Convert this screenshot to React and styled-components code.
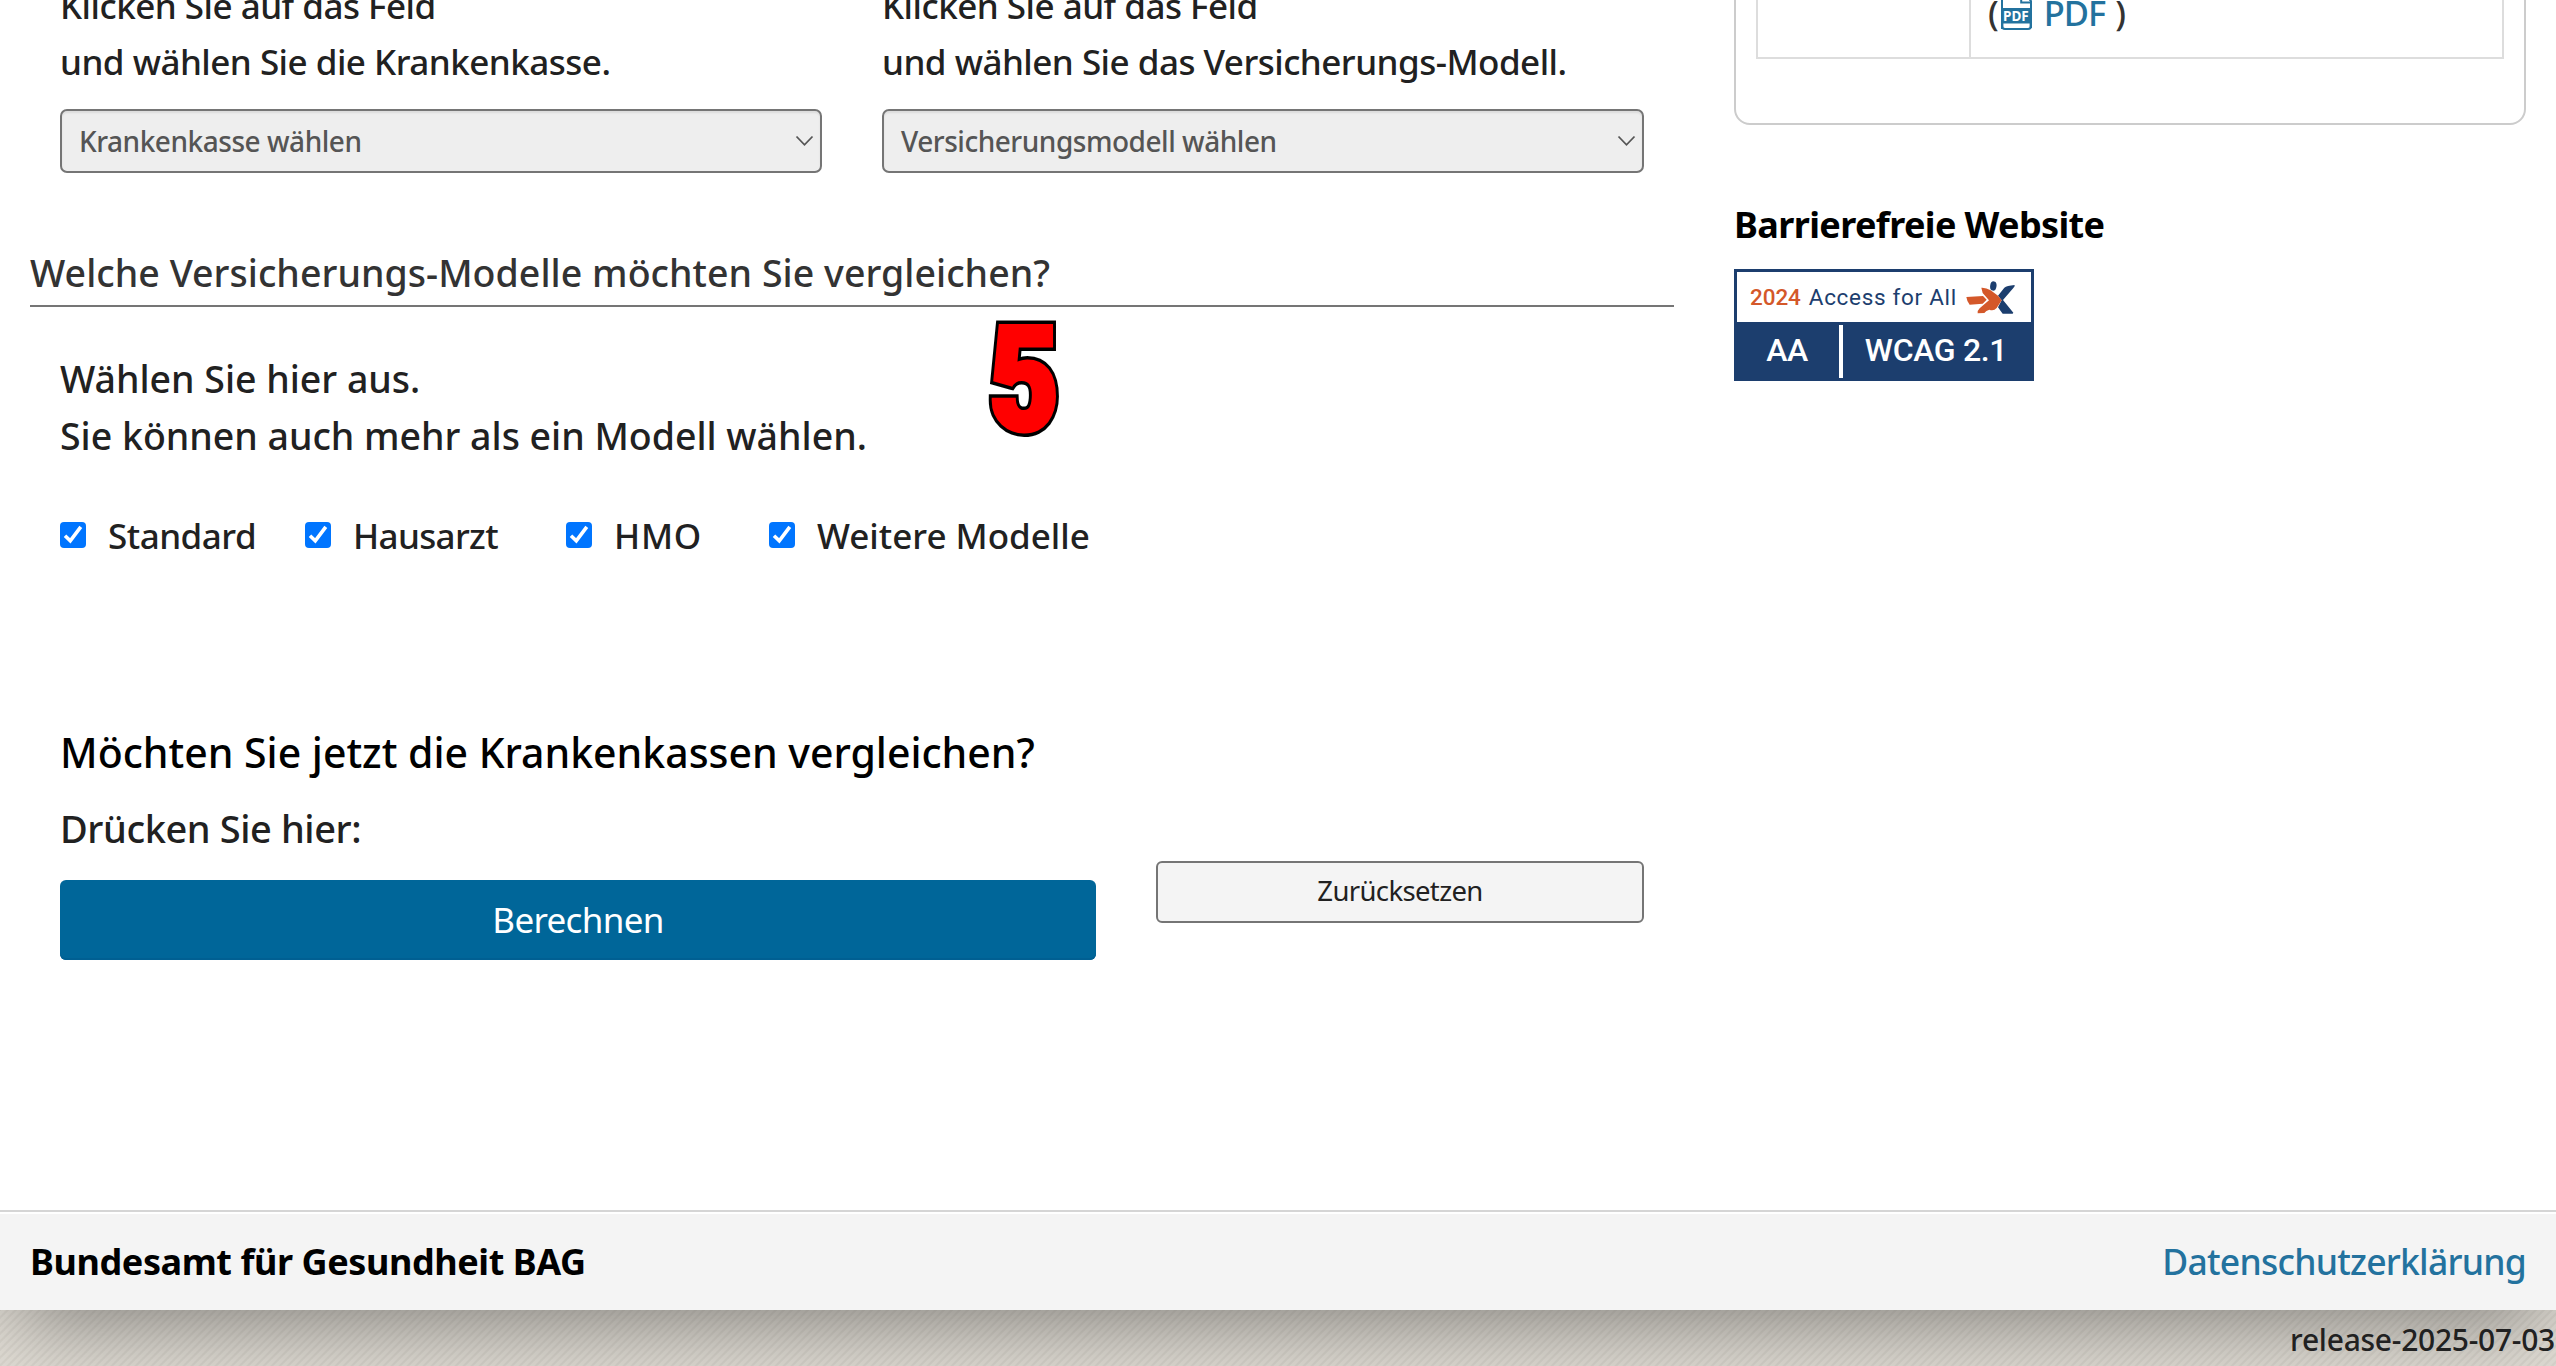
import React from "react";
import styled, { createGlobalStyle } from "styled-components";

const GlobalStyle = createGlobalStyle`
  *, *::before, *::after { box-sizing: border-box; }
  html { overflow: hidden; }
  body {
    margin: 0;
    color: #212121;
    font-family: "Noto Sans", "Open Sans", sans-serif;
    font-weight: 500;
    background: repeating-linear-gradient(135deg, #e1ddd5 0 2.4px, #d8d4cc 3.4px 4.6px, #e1ddd5 5.657px);
  }
  p, h2, h3 { margin: 0; font-weight: 500; }
`;

const Shell = styled.div`
  height: 1366px;
  overflow: hidden;
`;

const Panel = styled.div`
  height: 1310px;
  display: flex;
  flex-direction: column;
  background: #fff;
  box-shadow: 0 26px 80px -16px rgba(0, 0, 0, 0.44);
`;

const Content = styled.div`
  flex: 1;
  min-height: 0;
  overflow: hidden;
  display: grid;
  grid-template-columns: 1644px 792px;
  column-gap: 60px;
  padding: 0 30px;
`;

const Form = styled.main`
  display: flex;
  flex-direction: column;
`;

const FieldRow = styled.div`
  display: grid;
  grid-template-columns: 762px 762px;
  column-gap: 60px;
  margin-top: -22px;
  padding: 0 30px;
`;

const FieldHint = styled.p`
  font-size: 35px;
  line-height: 56px;
  letter-spacing: -0.51px;
  white-space: nowrap;
`;

const SelectBox = styled.div`
  display: flex;
  align-items: center;
  justify-content: space-between;
  height: 64px;
  margin-top: 19px;
  padding: 0 6px 1px 17px;
  border: 2px solid #757575;
  border-radius: 7px;
  background: #eee;
  box-shadow: inset 0 2px 2px rgba(0, 0, 0, 0.075);
  color: #555;
  font-size: 28px;
  letter-spacing: -0.47px;
`;

const SectionTitle = styled.h2`
  margin-top: 75px;
  padding-bottom: 7px;
  border-bottom: 2px solid #757575;
  color: #333;
  font-size: 37.5px;
  line-height: 50px;
  letter-spacing: 0.04px;
`;

const ModelSection = styled.section`
  position: relative;
  padding: 43px 30px 0;
`;

const Intro = styled.p`
  font-size: 37.5px;
  line-height: 57px;
  letter-spacing: -0.02px;
`;

const StepMarker = styled.span`
  position: absolute;
  left: 944px;
  top: -11px;
  width: 100px;
  text-align: center;
  color: #000;
  font-family: Roboto, sans-serif;
  font-size: 144px;
  font-weight: 900;
  line-height: 169px;
  transform: scaleX(0.84);
  -webkit-text-stroke: 12px #000;

  &::after {
    content: attr(data-step);
    position: absolute;
    inset: 0;
    color: #f00;
    -webkit-text-stroke: 5px #f00;
  }
`;

const CheckRow = styled.div`
  display: grid;
  grid-template-columns: 245px 261px 203px auto;
  margin-top: 46px;
`;

const CheckLabel = styled.label`
  display: flex;
  align-items: center;
  gap: 22px;
  font-size: 35px;
  line-height: 48px;
  padding-top: 2px;
  letter-spacing: ${(p) => p.$tracking}px;
  white-space: nowrap;
`;

const CheckMark = styled.span`
  display: flex;
  width: 26px;
  height: 26px;
  margin-bottom: 2px;
  border-radius: 4px;
  background: #0075ff;
`;

const SubmitSection = styled.section`
  margin-top: 162px;
  padding: 0 30px;
`;

const SubmitTitle = styled.h2`
  color: #000;
  font-size: 41px;
  line-height: 60px;
  letter-spacing: -0.01px;
`;

const Actions = styled.div`
  display: grid;
  grid-template-columns: 1036px 488px;
  column-gap: 60px;
  align-items: start;
  margin-top: 18px;
`;

const ActionHint = styled.p`
  font-size: 38px;
  line-height: 56px;
  letter-spacing: -0.42px;
  margin-bottom: 24px;
`;

const Button = styled.button`
  display: flex;
  align-items: center;
  justify-content: center;
  width: 100%;
  border-radius: 6px;
  font-family: inherit;
  font-weight: 400;
`;

const PrimaryButton = styled(Button)`
  height: 80px;
  padding: 0 0 2px;
  border: 0;
  background: #069;
  box-shadow: inset 0 -2px 0 #005f92;
  color: #fff;
  font-size: 35px;
  letter-spacing: -0.68px;
`;

const SecondaryButton = styled(Button)`
  height: 62px;
  margin-top: 61px;
  padding: 0 0 3px;
  border: 2px solid #757575;
  background: #f4f4f4;
  color: #212121;
  font-size: 27.5px;
  letter-spacing: -0.64px;
`;

const Sidebar = styled.aside`
  display: flex;
  flex-direction: column;
  align-items: stretch;
`;

const Card = styled.div`
  margin-top: -40px;
  padding: 20px 20px 64px;
  border: 2px solid #ccc;
  border-radius: 16px;
`;

const InfoTable = styled.div`
  display: grid;
  grid-template-columns: 211px 1fr;
  border: 2px solid #ddd;
`;

const InfoCell = styled.div`
  display: flex;
  align-items: center;
  height: 73px;
  padding: 0 0 15px 17px;
  color: #333;
  font-size: 34.5px;
  line-height: 58px;

  & + & { border-left: 2px solid #ddd; }
`;

const PdfLink = styled.a`
  display: flex;
  align-items: center;
  gap: 12px;
  margin: 0 10px 0 2px;
  color: #23729e;
  letter-spacing: -1px;

  svg { margin-bottom: 7px; }
`;

const SidebarTitle = styled.h3`
  margin-top: 75px;
  color: #000;
  font-size: 36px;
  font-weight: 700;
  line-height: 50px;
  letter-spacing: -0.62px;
`;

const Badge = styled.div`
  width: 300px;
  height: 112px;
  margin-top: 19px;
  display: grid;
  grid-template-rows: 50px 1fr;
  border: 3px solid #1c3e6e;
  background: #1c3e6e;
  color: #fff;
  font-family: Roboto, sans-serif;
`;

const BadgeTop = styled.div`
  display: flex;
  align-items: center;
  padding-left: 13px;
  background: #fff;
  color: #1c3e6e;
  font-size: 22.5px;
  font-weight: 400;
  letter-spacing: 0.69px;
  white-space: nowrap;

  svg { margin-left: 9px; }
`;

const BadgeYear = styled.span`
  margin-right: 8px;
  color: #d4582a;
  font-weight: 500;
  letter-spacing: -0.1px;
`;

const BadgeBottom = styled.div`
  display: grid;
  grid-template-columns: 102px 1fr;
  padding-top: 3px;
`;

const BadgeCell = styled.span`
  display: flex;
  align-items: center;
  justify-content: center;
  padding: 0 2px 3px 0;
  font-size: 32px;
  font-weight: 500;
  letter-spacing: -0.35px;

  & + & {
    border-left: 4px solid #fff;
  }
`;

const Footer = styled.footer`
  display: flex;
  align-items: center;
  justify-content: space-between;
  height: 100px;
  padding: 0 30px;
  border-top: 2px solid #d5d5d5;
  background: #f4f4f4;
  box-shadow: inset 0 2px 0 #fff;
`;

const Office = styled.span`
  color: #000;
  font-size: 36px;
  font-weight: 700;
  letter-spacing: -0.42px;
`;

const PrivacyLink = styled.a`
  color: #23729e;
  font-size: 35.5px;
  letter-spacing: -0.76px;
`;

const Release = styled.div`
  height: 56px;
  padding-right: 1px;
  text-align: right;
  font-size: 30px;
  line-height: 60px;
  letter-spacing: -0.27px;
`;

const Chevron = () => (
  <svg width="19" height="12" viewBox="0 0 19 12" fill="none" stroke="#555" strokeWidth="1.8">
    <path d="M1.5 1.5 9.5 9.8 17.5 1.5" />
  </svg>
);

const Tick = () => (
  <svg width="26" height="26" viewBox="0 0 26 26" fill="none" stroke="#fff" strokeWidth="3.6">
    <path d="M5 13.8 10.3 18.8 20.8 4.9" />
  </svg>
);

const PdfIcon = () => (
  <svg width="31" height="41" viewBox="0 0 31 41">
    <path
      d="M1 40V3a2 2 0 0 1 2-2h17.5L30 12v25a3 3 0 0 1-3 3H4a3 3 0 0 1-3-3"
      fill="#fff"
      stroke="#23729e"
      strokeWidth="2"
    />
    <path d="M20.2 1v12.5H30" fill="none" stroke="#23729e" strokeWidth="2" />
    <path d="M0 19h31v15.5H0z" fill="#23729e" />
    <path d="M0 34h2.4v6H0zM28.6 34H31v5h-2.4z" fill="#23729e" />
    <text x="2" y="31.7" fill="#fff" fontFamily="Noto Sans, sans-serif" fontSize="13.5" fontWeight="700" letterSpacing="0">
      PDF
    </text>
  </svg>
);

const FigureLogo = () => (
  <svg width="49" height="33" viewBox="738 89 147 99">
    <ellipse cx="820" cy="104" rx="9.5" ry="14" fill="#1c3e6e" transform="rotate(8 820 104)" />
    <path d="M834 133 853 109Q860 103 884 101Q885 105 880 110L849 146 880 184 878 187H848L834 168 845 147Z" fill="#1c3e6e" />
    <path d="M739 137 789 134 800 145 788 157 749 160Q741 151 739 137Z" fill="#d4582a" />
    <path d="M784 109Q798 108 812 117L834 133 845 147 830 170Q821 180 808 175Q798 178 793 185L773 186Q771 179 779 171L807 147 788 125Z" fill="#d4582a" />
  </svg>
);

const fields = [
  { action: "und wählen Sie die Krankenkasse.", placeholder: "Krankenkasse wählen" },
  { action: "und wählen Sie das Versicherungs-Modell.", placeholder: "Versicherungsmodell wählen" },
];

const models = [
  { name: "Standard", tracking: -0.5 },
  { name: "Hausarzt", tracking: -0.65 },
  { name: "HMO", tracking: 0.7 },
  { name: "Weitere Modelle", tracking: 0 },
];

export default function App() {
  return (
    <>
      <GlobalStyle />
      <Shell>
        <Panel>
          <Content>
            <Form>
              <FieldRow>
                {fields.map((field) => (
                  <div key={field.placeholder}>
                    <FieldHint>
                      Klicken Sie auf das Feld
                      <br />
                      {field.action}
                    </FieldHint>
                    <SelectBox>
                      {field.placeholder}
                      <Chevron />
                    </SelectBox>
                  </div>
                ))}
              </FieldRow>
              <SectionTitle>Welche Versicherungs-Modelle möchten Sie vergleichen?</SectionTitle>
              <ModelSection>
                <Intro>
                  Wählen Sie hier aus.
                  <br />
                  Sie können auch mehr als ein Modell wählen.
                </Intro>
                <StepMarker data-step="5">5</StepMarker>
                <CheckRow>
                  {models.map((model) => (
                    <CheckLabel key={model.name} $tracking={model.tracking}>
                      <CheckMark>
                        <Tick />
                      </CheckMark>
                      {model.name}
                    </CheckLabel>
                  ))}
                </CheckRow>
              </ModelSection>
              <SubmitSection>
                <SubmitTitle>Möchten Sie jetzt die Krankenkassen vergleichen?</SubmitTitle>
                <Actions>
                  <div>
                    <ActionHint>Drücken Sie hier:</ActionHint>
                    <PrimaryButton>Berechnen</PrimaryButton>
                  </div>
                  <SecondaryButton>Zurücksetzen</SecondaryButton>
                </Actions>
              </SubmitSection>
            </Form>
            <Sidebar>
              <Card>
                <InfoTable>
                  <InfoCell />
                  <InfoCell>
                    (
                    <PdfLink>
                      <PdfIcon />
                      PDF
                    </PdfLink>
                    )
                  </InfoCell>
                </InfoTable>
              </Card>
              <SidebarTitle>Barrierefreie Website</SidebarTitle>
              <Badge>
                <BadgeTop>
                  <BadgeYear>2024</BadgeYear>
                  Access for All
                  <FigureLogo />
                </BadgeTop>
                <BadgeBottom>
                  <BadgeCell>AA</BadgeCell>
                  <BadgeCell>WCAG 2.1</BadgeCell>
                </BadgeBottom>
              </Badge>
            </Sidebar>
          </Content>
          <Footer>
            <Office>Bundesamt für Gesundheit BAG</Office>
            <PrivacyLink>Datenschutzerklärung</PrivacyLink>
          </Footer>
        </Panel>
        <Release>release-2025-07-03</Release>
      </Shell>
    </>
  );
}
